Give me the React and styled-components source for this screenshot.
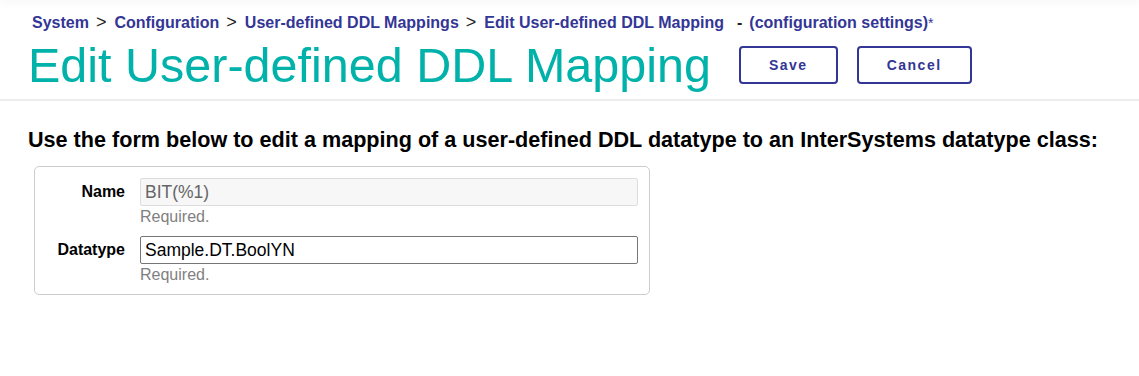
import React from 'react'
import styled, {createGlobalStyle} from 'styled-components'

const GlobalStyle = createGlobalStyle`
    body {
        margin: 0;
        background: #ffffff;
        font-family: "Liberation Sans", Arial, sans-serif;
    }
`

export default function App() {
    const fields = [
        {label: 'Name', value: 'BIT(%1)', disabled: true},
        {label: 'Datatype', value: 'Sample.DT.BoolYN', disabled: false},
    ]

    return (
        <Page>
            <GlobalStyle />
            <TopShadow />
            <Header>
                <Breadcrumb>
                    <Crumb>System</Crumb>
                    <Sep>&gt;</Sep>
                    <Crumb>Configuration</Crumb>
                    <Sep>&gt;</Sep>
                    <Crumb>User-defined DDL Mappings</Crumb>
                    <Sep>&gt;</Sep>
                    <Crumb>Edit User-defined DDL Mapping</Crumb>
                    <Dash>-</Dash>
                    <Crumb>(configuration settings)</Crumb>
                    <Star>*</Star>
                </Breadcrumb>
                <TitleRow>
                    <Title>Edit User-defined DDL Mapping</Title>
                    <Buttons>
                        <Button>Save</Button>
                        <Button>Cancel</Button>
                    </Buttons>
                </TitleRow>
            </Header>
            <Divider />
            <Content>
                <Intro>Use the form below to edit a mapping of a user-defined DDL datatype to an InterSystems datatype class:</Intro>
                <FormBox>
                    {fields.map((f) => (
                        <FieldRow key={f.label}>
                            <Label>{f.label}</Label>
                            <FieldCol>
                                <Input defaultValue={f.value} disabled={f.disabled} />
                                <Hint>Required.</Hint>
                            </FieldCol>
                        </FieldRow>
                    ))}
                </FormBox>
            </Content>
        </Page>
    )
}

const Page = styled.div`
    width: 100%;
    min-height: 376px;
    background: #ffffff;
`

const TopShadow = styled.div`
    height: 1px;
    margin-top: -1px;
    box-shadow: 0 0 10px rgba(0, 0, 0, 0.25);
`

const Header = styled.div`
    padding: 12px 0 0 28px;
`

const Breadcrumb = styled.div`
    display: flex;
    align-items: baseline;
    padding-left: 4px;
    height: 19px;
    white-space: nowrap;
`

const Crumb = styled.span`
    font-size: 16px;
    font-weight: bold;
    color: #333695;
`

const Sep = styled.span`
    font-size: 18px;
    color: #222;
    margin: 0 8px 0 7px;
`

const Dash = styled.span`
    font-size: 16px;
    font-weight: bold;
    color: #222;
    margin: 0 7px 0 13px;
`

const Star = styled.span`
    font-size: 14px;
    color: #333695;
`

const TitleRow = styled.div`
    display: flex;
    align-items: center;
    height: 68px;
`

const Title = styled.h1`
    margin: 0 28px 0 0;
    font-size: 48.5px;
    font-weight: normal;
    color: #00b2a9;
    line-height: 1;
`

const Buttons = styled.div`
    display: flex;
    gap: 19px;
`

const Button = styled.button`
    height: 38px;
    padding: 0 28px;
    background: #ffffff;
    border: 2px solid #333695;
    border-radius: 4px;
    font-family: "Liberation Sans", Arial, sans-serif;
    font-size: 14px;
    font-weight: bold;
    letter-spacing: 1.5px;
    color: #333695;
`

const Divider = styled.div`
    height: 2px;
    background: #ececec;
`

const Content = styled.div`
    padding: 26px 28px 0 28px;
`

const Intro = styled.h2`
    margin: 0;
    font-size: 21.6px;
    font-weight: bold;
    color: #000;
    line-height: 26px;
    white-space: nowrap;
`

const FormBox = styled.div`
    margin: 13px 0 0 6px;
    width: 616px;
    box-sizing: border-box;
    border: 1px solid #cccccc;
    border-radius: 5px;
    padding: 11px 11px 10px 0;
    display: flex;
    flex-direction: column;
    gap: 10px;
`

const FieldRow = styled.div`
    display: flex;
    align-items: flex-start;
`

const Label = styled.div`
    width: 90px;
    flex: none;
    text-align: right;
    font-size: 16px;
    font-weight: bold;
    color: #000;
    line-height: 28px;
    padding-right: 15px;
`

const FieldCol = styled.div`
    flex: 1;
    display: flex;
    flex-direction: column;
`

const Input = styled.input`
    height: 28px;
    box-sizing: border-box;
    width: 100%;
    padding: 1px 4px;
    font-family: "Liberation Sans", Arial, sans-serif;
    font-size: 17.5px;
    color: #000;
    background: #ffffff;
    border: 1px solid #767676;
    border-radius: 2px;
    outline: none;
    &:disabled {
        background: #f7f7f7;
        color: #666;
        border-color: #dddddd;
    }
`

const Hint = styled.div`
    margin-top: 2px;
    font-size: 16px;
    line-height: 18px;
    color: #808080;
`
